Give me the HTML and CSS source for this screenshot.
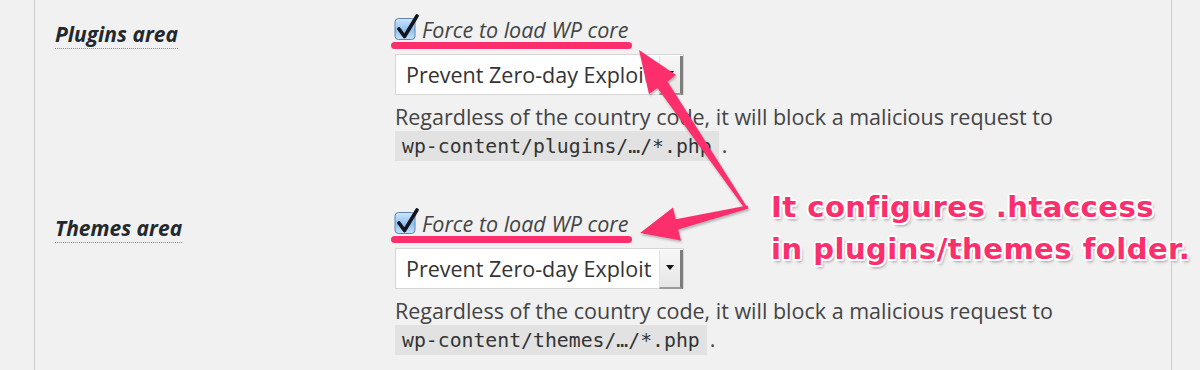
FILE: index.html
```html
<!DOCTYPE html>
<html lang="en">
<head>
    <meta charset="UTF-8">
    <title>Force to load WP core</title>
    <link rel="stylesheet" href="styles.css">
</head>
<body>
    <div class="wrap">
        <div class="row">
            <div class="label"><span class="tip">Plugins area</span></div>
            <div class="field">
                <label class="check">
                    <svg class="box" width="26" height="28" viewBox="0 0 26 28">
                        <defs>
                            <linearGradient id="aqua1" x1="0" y1="0" x2="0" y2="1">
                                <stop offset="0" stop-color="#cfe5fa"/>
                                <stop offset="0.55" stop-color="#8fc2f1"/>
                                <stop offset="1" stop-color="#c6e2fb"/>
                            </linearGradient>
                        </defs>
                        <rect x="2" y="4.5" width="20" height="21" rx="3.5" fill="url(#aqua1)" stroke="#5f84ad"/>
                        <path d="M6 15 L11.5 22.5 L24 2" fill="none" stroke="#14141e" stroke-width="3.6" stroke-linecap="round" stroke-linejoin="round"/>
                    </svg>
                    <span>Force to load WP core</span>
                </label>
                <div class="select">
                    <span class="select-text">Prevent Zero-day Exploit</span>
                    <span class="select-btn"></span>
                </div>
                <p class="description">Regardless of the country code, it will block a malicious request to <code>wp-content/plugins/&hellip;/*.php</code>.</p>
            </div>
        </div>
        <div class="row">
            <div class="label"><span class="tip">Themes area</span></div>
            <div class="field">
                <label class="check">
                    <svg class="box" width="26" height="28" viewBox="0 0 26 28">
                        <defs>
                            <linearGradient id="aqua2" x1="0" y1="0" x2="0" y2="1">
                                <stop offset="0" stop-color="#cfe5fa"/>
                                <stop offset="0.55" stop-color="#8fc2f1"/>
                                <stop offset="1" stop-color="#c6e2fb"/>
                            </linearGradient>
                        </defs>
                        <rect x="2" y="4.5" width="20" height="21" rx="3.5" fill="url(#aqua2)" stroke="#5f84ad"/>
                        <path d="M6 15 L11.5 22.5 L24 2" fill="none" stroke="#14141e" stroke-width="3.6" stroke-linecap="round" stroke-linejoin="round"/>
                    </svg>
                    <span>Force to load WP core</span>
                </label>
                <div class="select">
                    <span class="select-text">Prevent Zero-day Exploit</span>
                    <span class="select-btn"></span>
                </div>
                <p class="description">Regardless of the country code, it will block a malicious request to <code>wp-content/themes/&hellip;/*.php</code>.</p>
            </div>
        </div>
    </div>

    <!-- annotation layer -->
    <svg class="arrows" width="1200" height="370" viewBox="0 0 1200 370">
        <polygon points="639,50 676,75 667.5,81.5 747,207 745,209 657.5,88 649,94"/>
        <polygon points="640,233 673,207.6 675.7,219.2 747.6,205.5 748.4,208.5 678.1,229.5 681,240.6"/>
    </svg>
    <div class="note">It configures .htaccess<br>in plugins/themes folder.</div>
</body>
</html>
```

FILE: styles.css
```css
body {
    margin: 0;
    background-color: #f1f1f1;
    font-family: "Open Sans", "Noto Sans", sans-serif;
    color: #444;
    position: relative;
    height: 370px;
    overflow: hidden;
}
.wrap {
    margin-left: 34px;
    width: 1136px;
    min-height: 370px;
    border-left: 1px solid #cdcdcd;
    border-right: 1px solid #cdcdcd;
}
.row {
    display: grid;
    grid-template-columns: 340px 1fr;
    padding: 17px 0 33px 20px;
}
.row:last-child {
    padding-bottom: 17px;
}
.label {
    padding-top: 3px;
    font-size: 21px;
    line-height: 28px;
    font-weight: bold;
    font-style: italic;
    color: #23282d;
}
.tip {
    border-bottom: 1px dotted #8a8a8a;
}
.field {
    display: flex;
    flex-direction: column;
    align-items: flex-start;
}
.check {
    position: relative;
    display: flex;
    align-items: center;
    height: 24px;
    font-size: 21.5px;
    font-style: italic;
    color: #444;
}
.check .box {
    margin: -2px 3px 0 -2px;
}
.check::after {
    content: "";
    position: absolute;
    left: -4px;
    top: 25px;
    width: 241px;
    height: 7px;
    border-radius: 4px;
    background-color: #fd2e6c;
}
.select {
    display: flex;
    margin-top: 13px;
    width: 289px;
    height: 41px;
    box-sizing: border-box;
    background-color: #fff;
    border: 1px solid #d6d6d6;
}
.select-text {
    flex: 1;
    padding-left: 10px;
    font-size: 21.5px;
    line-height: 39px;
    color: #333;
    white-space: nowrap;
    overflow: hidden;
}
.select-btn {
    position: relative;
    width: 20px;
    margin: 1px 0 -1px;
    background: linear-gradient(#f7f7f7, #e6e6e6);
    border-left: 1px solid #e2e2e2;
    border-right: 3px solid #7d7d7d;
    border-bottom: 2px solid #9a9a9a;
}
.select-btn::after {
    content: "";
    position: absolute;
    left: 6px;
    top: 15px;
    border-left: 4px solid transparent;
    border-right: 4px solid transparent;
    border-top: 5px solid #111;
}
.description {
    margin: 8px 0 0;
    font-size: 21.5px;
    line-height: 28px;
    color: #444;
}
code {
    font-family: "DejaVu Sans Mono", "Liberation Mono", monospace;
    font-size: 19.8px;
    padding: 4px 7px 3px;
    margin-right: 3px;
    background-color: #e2e2e2;
    color: #333;
    white-space: nowrap;
}
.arrows {
    position: absolute;
    top: 0;
    left: 0;
    fill: #fd2e6c;
    filter: drop-shadow(1px 2px 1px rgba(0, 0, 0, 0.25));
}
.note {
    position: absolute;
    left: 771px;
    top: 186px;
    font-family: "DejaVu Sans", sans-serif;
    font-weight: bold;
    font-size: 29px;
    letter-spacing: 0.5px;
    line-height: 42px;
    color: #fd2e6c;
    white-space: nowrap;
    text-shadow: 2px 0 #fff, -2px 0 #fff, 0 2px #fff, 0 -2px #fff,
        1.5px 1.5px #fff, -1.5px -1.5px #fff, 1.5px -1.5px #fff, -1.5px 1.5px #fff,
        2px 3px 3px rgba(0, 0, 0, 0.35);
}
```
